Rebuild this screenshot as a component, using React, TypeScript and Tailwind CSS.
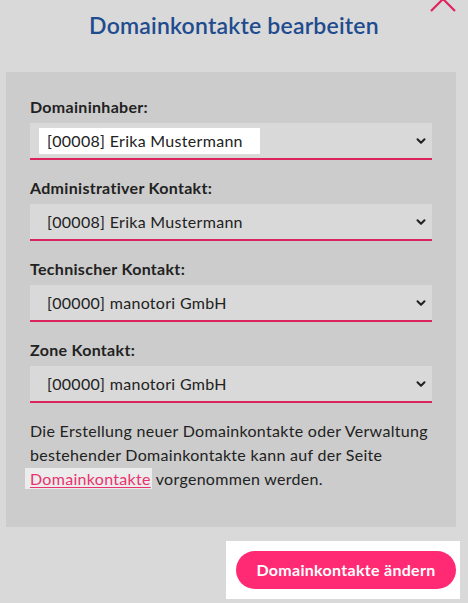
import { ChevronDown } from 'lucide-react';

const fields = [
  { label: 'Domaininhaber:', value: '[00008] Erika Mustermann', focused: true },
  { label: 'Administrativer Kontakt:', value: '[00008] Erika Mustermann', focused: false },
  { label: 'Technischer Kontakt:', value: '[00000] manotori GmbH', focused: false },
  { label: 'Zone Kontakt:', value: '[00000] manotori GmbH', focused: false },
];

export default function App() {
  return (
    <div
      className="relative w-[468px] h-[603px] overflow-hidden bg-[#d9d9d9] text-[#222] tracking-[0.3px]"
      style={{ fontFamily: 'Lato, "Open Sans", sans-serif' }}
    >
      <svg className="absolute right-[12px] top-[-14px] w-[26px] h-[26px]" viewBox="0 0 26 26">
        <path d="M1 1 L25 25 M25 1 L1 25" stroke="#e0245e" strokeWidth="2.2" fill="none" />
      </svg>

      <h1 className="pt-[8px] h-[72px] text-center text-[23px] font-semibold text-[#1f4b8f] tracking-[0.2px]">
        Domainkontakte bearbeiten
      </h1>

      <div className="ml-[6px] w-[450px] bg-[#cccccc] px-[24px] pt-[24px] pb-[36px]">
        <div className="flex flex-col gap-[17px]">
          {fields.map((f) => (
            <div key={f.label} className="flex flex-col">
              <label className="text-[16px] font-bold leading-[22px] mb-[5px]">{f.label}</label>
              <div className="flex items-center justify-between h-[37px] bg-[#d9d9d9] border-b-2 border-[#d9245e] pl-[9px] pr-[4px]">
                <span
                  className={`text-[16px] leading-[26px] px-[8px] ${
                    f.focused ? 'bg-white w-[221px]' : ''
                  }`}
                >
                  {f.value}
                </span>
                <ChevronDown className="w-[14px] h-[14px] text-[#222]" strokeWidth={3.5} />
              </div>
            </div>
          ))}
        </div>

        <p className="mt-[16px] text-[16px] leading-[24px]">
          Die Erstellung neuer Domainkontakte oder Verwaltung bestehender Domainkontakte kann auf der Seite{' '}
          <a className="-ml-[5px] pl-[5px] pr-[1px] py-[1px] bg-[#ececec] text-[#e8336e] underline underline-offset-2">
            Domainkontakte
          </a>{' '}
          vorgenommen werden.
        </p>
      </div>

      <div className="flex justify-end pr-[8px] pt-[14px]">
        <div className="bg-white pl-[10px] pr-[4px] py-[10px]">
          <button className="h-[38px] w-[220px] rounded-full bg-[#ff2a73] text-white text-[16px] font-bold">
            Domainkontakte ändern
          </button>
        </div>
      </div>
    </div>
  );
}
